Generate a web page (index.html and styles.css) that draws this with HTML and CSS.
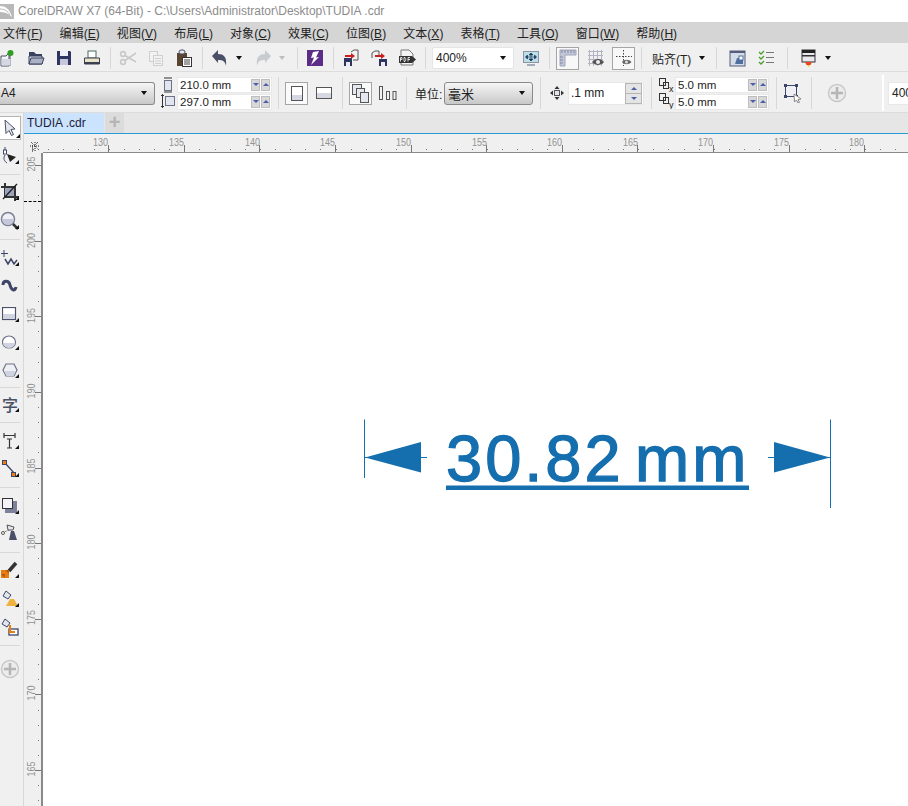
FILE: index.html
```html
<!DOCTYPE html>
<html lang="zh">
<head>
<meta charset="utf-8">
<title>CorelDRAW X7</title>
<link rel="stylesheet" href="styles.css">
</head>
<body>
<div class="app">
  <header class="title">
    <svg class="logo" width="15" height="15" viewBox="0 0 15 15"><rect width="15" height="15" fill="#b9b9b9"/><path d="M1 2c5 0 10 3 12 11C9 9 5 8 1 8z" fill="#fff"/><path d="M1 5c4 0 8 2 10 6" stroke="#b9b9b9" fill="none"/></svg>
    <span>CorelDRAW X7 (64-Bit) - C:\Users\Administrator\Desktop\TUDIA .cdr</span>
  </header>
  <nav class="menu">
    <span>文件(<u>F</u>)</span><span>编辑(<u>E</u>)</span><span>视图(<u>V</u>)</span><span>布局(<u>L</u>)</span><span>对象(<u>C</u>)</span><span>效果(<u>C</u>)</span><span>位图(<u>B</u>)</span><span>文本(<u>X</u>)</span><span>表格(<u>T</u>)</span><span>工具(<u>O</u>)</span><span>窗口(<u>W</u>)</span><span>帮助(<u>H</u>)</span>
  </nav>

  <div class="tb1">
    <div class="cell first"><svg width="18" height="18" viewBox="0 0 18 18"><path d="M2 7h5l3-3v13H2z M8 5h3v12" fill="#f4f4f4" stroke="#4a5068"/><rect x="2.500" y="10" width="9" height="6.500" fill="#d5d7e2"/><circle cx="11.500" cy="4" r="3" fill="#2f9e1f"/></svg></div>
    <div class="cell"><svg width="18" height="18" viewBox="0 0 18 18"><path d="M2 3h5l2 2h6v3H2z" fill="#39415f"/><path d="M2 15V7h13v8z" fill="#d6d9e4" stroke="#39415f"/><path d="M2 15l2-6h13l-2 6z" fill="#aab0c6" stroke="#39415f"/></svg></div>
    <div class="cell"><svg width="18" height="18" viewBox="0 0 18 18"><path d="M2 2h13l1 1v13H2z" fill="#2e3560"/><rect x="5" y="2" width="8" height="5" fill="#eef0f6"/><rect x="5" y="10" width="8" height="6" fill="#c4c8da"/></svg></div>
    <div class="cell"><svg width="18" height="18" viewBox="0 0 18 18"><rect x="5" y="2" width="8" height="7" fill="#fff" stroke="#4a6a5f"/><path d="M1.500 9h15v6h-15z" fill="#e9e3c8" stroke="#3b3f52"/><rect x="2" y="13" width="14" height="2" fill="#3b3f52"/></svg></div>
    <i class="sep"></i>
    <div class="cell"><svg width="18" height="18" viewBox="0 0 18 18"><g fill="none" stroke="#c9c9c9" stroke-width="1.600"><circle cx="4" cy="5" r="2.400"/><circle cx="4" cy="13" r="2.400"/><path d="M6 6.500L17 13M6 11.500L17 4"/></g></svg></div>
    <div class="cell"><svg width="18" height="18" viewBox="0 0 18 18"><g fill="#f2f2f2" stroke="#cfcfcf"><rect x="2.500" y="2.500" width="8" height="10"/><rect x="6.500" y="6.500" width="9" height="10"/></g><path d="M8 9.500h6M8 12h6M8 14.500h6" stroke="#cfcfcf"/></svg></div>
    <div class="cell"><svg width="18" height="18" viewBox="0 0 18 18"><rect x="2" y="4" width="10" height="13" fill="#5a4630"/><rect x="4" y="1" width="6" height="4" rx="2" fill="#e7e7e7" stroke="#4a5068"/><rect x="7.500" y="8.500" width="9" height="9" fill="#fff" stroke="#333"/><path d="M9 11h6M9 13h6M9 15h6" stroke="#444"/></svg></div>
    <i class="sep"></i>
    <div class="cell"><svg width="18" height="18" viewBox="0 0 18 18"><path d="M1 7l6-6v4c6 0 9 3 8 12-1-5-3-6-8-6v3z" fill="#4a5068"/></svg></div>
    <div class="cell narrow"><i class="caret"></i></div>
    <div class="cell ml5"><svg width="18" height="18" viewBox="0 0 18 18"><path d="M17 7l-6-6v4C5 5 2 8 3 17c1-5 3-6 8-6v3z" fill="#c8ccd0"/></svg></div>
    <div class="cell narrow"><i class="caret faded"></i></div>
    <i class="sep ml6"></i>
    <div class="cell"><svg width="18" height="18" viewBox="0 0 18 18"><rect x="1" y="1" width="16" height="16" fill="#5b2d88"/><path d="M13 2L7 3 5 9l3-.5-3 7.500 8-8-3 .5z" fill="#fff"/></svg></div>
    <i class="sep"></i>
    <div class="cell"><svg width="18" height="18" viewBox="0 0 18 18"><path d="M9 3l3-2h4v10h-5" fill="#f2f2f2" stroke="#555"/><rect x="2" y="9" width="8" height="8" fill="#2e3560"/><rect x="4" y="13" width="4" height="4" fill="#eee"/><path d="M3 6h6V4l4 3-4 3V8H3z" fill="#c81e1e"/></svg></div>
    <div class="cell"><svg width="18" height="18" viewBox="0 0 18 18"><path d="M2 9V4l3-2h4v6" fill="#f2f2f2" stroke="#555"/><rect x="9" y="10" width="8" height="7" fill="#2e3560"/><rect x="11" y="13" width="4" height="4" fill="#eee"/><path d="M5 6h6V4l4 3-4 3V8H5z" fill="#c81e1e"/></svg></div>
    <div class="cell"><svg width="18" height="18" viewBox="0 0 18 18"><path d="M3 1h8l4 4v11H3z" fill="#f4f4f4" stroke="#777"/><rect x="1" y="7" width="13" height="7" fill="#333"/><path d="M14 7l4 3.500-4 3.500z" fill="#333"/><path d="M2.500 12.500v-4h1.500v2H2.500M6 8.500v4h1c1 0 1-4 0-4zM10 12.500v-4h2M10 10.500h2" stroke="#fff" stroke-width=".8" fill="none"/></svg></div>
    <i class="sep"></i>
    <div class="zoom ml3"><span>400%</span><i class="caret"></i></div>
    <div class="cell ml3"><svg width="18" height="18" viewBox="0 0 18 18"><rect x="1.500" y="2.500" width="15" height="11" fill="#bcdfe6" stroke="#8a94a8"/><path d="M9 4v8M4 8h10M9 4l-2 2h4zM9 12l-2-2h4zM3.500 8l2-2v4zM14.500 8l-2-2v4z" stroke="#1e3a5f" stroke-width=".7" fill="#1e3a5f"/><path d="M5 16h8" stroke="#8a94a8" stroke-width="1.500"/></svg></div>
    <i class="sep"></i>
    <div class="boxed ml3"><svg width="18" height="18" viewBox="0 0 18 18"><path d="M1 1h16v5H6v11H1z" fill="#c2c8da" stroke="#a0a6b8"/><path d="M3 1v3M6 1v3M9 1v3M12 1v3M15 1v3M1 8h3M1 11h3M1 14h3" stroke="#858ba0"/></svg></div>
    <div class="cell ml3"><svg width="18" height="18" viewBox="0 0 18 18"><path d="M1 2.500h15M1 6.500h15M1 10.500h15M1 14.500h15M2.500 1v16M6.500 1v16M10.500 1v16M14.500 1v16" stroke="#b2b4c4" fill="none"/><path d="M5 13c3-4 9-4 12 0-3 4-9 4-12 0z" fill="#555"/><circle cx="11" cy="13" r="2" fill="#eee"/></svg></div>
    <div class="boxed ml2"><svg width="18" height="18" viewBox="0 0 18 18"><path d="M8.500 1v16M1 7.500h16" stroke="#444" stroke-dasharray="1.500 1.500"/><path d="M7 13c2-3 7-3 9.500 0-2.500 3-7.500 3-9.500 0z" fill="#666"/><circle cx="11.500" cy="13" r="1.500" fill="#ddd"/></svg></div>
    <i class="sep ml2"></i>
    <div class="snap ml7">贴齐(T)</div>
    <div class="cell narrow ml6"><i class="caret"></i></div>
    <i class="sep ml5"></i>
    <div class="cell ml3"><svg width="18" height="18" viewBox="0 0 18 18"><rect x="2" y="2" width="15" height="15" fill="#d4dcea" stroke="#555d7a"/><rect x="2" y="2" width="15" height="2" fill="#555d7a"/><path d="M7 15l2-6h6v6z" fill="#4f6fa0"/><rect x="11" y="7" width="4" height="4" fill="#fff" stroke="#4f6fa0"/></svg></div>
    <div class="cell ml1"><svg width="18" height="18" viewBox="0 0 18 18"><g fill="none" stroke="#4aa02c" stroke-width="1.300"><path d="M2 3l2 2 3-3M2 8l2 2 3-3M2 13l2 2 3-3"/></g><path d="M9 3.500h8M9 8.500h8M9 13.500h8" stroke="#777" stroke-width="1.200"/></svg></div>
    <i class="sep ml3"></i>
    <div class="cell ml3"><svg width="18" height="18" viewBox="0 0 18 18"><rect x="3" y="1" width="13" height="12" fill="#e8e8ee" stroke="#333"/><rect x="3" y="1" width="13" height="3" fill="#222"/><rect x="3" y="6" width="13" height="1.500" fill="#333"/><path d="M6 13h7l-1.500 3h-4z" fill="#e8461e"/><path d="M8 16h3l-1.500 2z" fill="#f3c318"/></svg></div>
    <div class="cell narrow ml1"><i class="caret"></i></div>
  </div>

  <div class="tb2">
    <div class="combo first-combo"><span>A4</span><i class="caret"></i></div>
    <div class="stack ml6">
      <svg width="14" height="16" viewBox="0 0 14 16"><path d="M3 1h8M3 15h8" stroke="#333"/><rect x="3.500" y="3.500" width="7" height="10" fill="#e2e4ee" stroke="#6c7288"/></svg>
      <svg width="14" height="16" viewBox="0 0 14 16"><path d="M1.500 1v14M0 2.500h3M0 13.500h3" stroke="#333"/><rect x="4.500" y="3.500" width="9" height="9" fill="#e2e4ee" stroke="#6c7288"/></svg>
    </div>
    <div class="pair ml2">
      <div class="field"><span>210.0 mm</span><b class="spin down"></b><b class="spin up"></b></div>
      <div class="field"><span>297.0 mm</span><b class="spin down"></b><b class="spin up"></b></div>
    </div>
    <i class="bar ml6"></i>
    <div class="boxed2 ml6"><svg width="12" height="15" viewBox="0 0 12 15"><rect x=".5" y=".5" width="11" height="14" fill="#fff" stroke="#555"/><rect x="1" y="9" width="10" height="5" fill="#d5d7e2"/></svg></div>
    <div class="cell2"><svg width="16" height="12" viewBox="0 0 16 12"><rect x=".5" y=".5" width="15" height="11" fill="#fff" stroke="#555"/><rect x="1" y="6" width="14" height="5" fill="#d5d7e2"/></svg></div>
    <i class="bar ml2"></i>
    <div class="boxed2 ml6"><svg width="17" height="19" viewBox="0 0 17 19"><rect x=".5" y=".5" width="9" height="10" fill="#e6e8f0" stroke="#555"/><rect x="4.500" y="4.500" width="8" height="9" fill="#e6e8f0" stroke="#555"/><rect x="8.500" y="8.500" width="8" height="10" fill="#e6e8f0" stroke="#555"/></svg></div>
    <div class="cell2"><svg width="18" height="14" viewBox="0 0 18 14"><g fill="#f2f2f6" stroke="#555"><rect x=".5" y=".5" width="3" height="13"/><rect x="7.500" y="5.500" width="3" height="8"/><rect x="14" y="5.500" width="3" height="8"/></g></svg></div>
    <i class="bar ml2"></i>
    <span class="label ml8">单位:</span>
    <div class="combo unit ml2"><span>毫米</span><i class="caret"></i></div>
    <i class="bar ml7"></i>
    <div class="cell3 ml8"><svg width="14" height="14" viewBox="0 0 14 14"><path d="M7 0l2.500 3h-5zM7 14l2.500-3h-5zM0 7l3-2.500v5zM14 7l-3-2.500v5z" fill="#333"/><rect x="4.500" y="4.500" width="5" height="5" fill="#e2e4ee" stroke="#555"/></svg></div>
    <div class="nudge ml3"><span>.1 mm</span><div class="vspin"><b class="up"></b><b class="down"></b></div></div>
    <i class="bar ml7"></i>
    <div class="stack dup ml7">
      <svg width="15" height="16" viewBox="0 0 15 16"><g fill="none" stroke="#333"><rect x=".5" y="1.500" width="6" height="7"/><rect x="4.500" y="5.500" width="5" height="6"/></g><text x="10" y="15" class="xy">x</text></svg>
      <svg width="15" height="16" viewBox="0 0 15 16"><g fill="none" stroke="#333"><rect x=".5" y=".5" width="6" height="7"/><rect x="4.500" y="4.500" width="5" height="6"/></g><text x="10" y="15" class="xy">y</text></svg>
    </div>
    <div class="pair dupf">
      <div class="field"><span>5.0 mm</span><b class="spin down"></b><b class="spin up"></b></div>
      <div class="field"><span>5.0 mm</span><b class="spin down"></b><b class="spin up"></b></div>
    </div>
    <i class="bar ml7"></i>
    <div class="cell4 ml6"><svg width="20" height="20" viewBox="0 0 20 20"><rect x="2.500" y="2.500" width="11" height="11" fill="#eef0f6" stroke="#3d4668"/><path d="M1 1h3v3H1zM12 1h3v3h-3zM1 12h3v3H1zM12 12h3v3h-3z" fill="#3d4668"/><path d="M11 11l7 5-3 .5 1.500 3-1.500.5-1.500-3-2 2z" fill="#fff" stroke="#888"/></svg></div>
    <i class="bar ml8"></i>
    <div class="cell4 ml15"><svg width="20" height="20" viewBox="0 0 20 20"><circle cx="10" cy="10" r="8.500" fill="#ececec" stroke="#c8c8c8" stroke-width="1.500"/><path d="M10 4v12M4 10h12" stroke="#b5b5b5" stroke-width="2.500"/></svg></div>
    <i class="strip"></i>
    <div class="last"><span>400</span></div>
  </div>

  <div class="main">
    <aside class="tools">
      <div class="tool pick"><svg width="16" height="18" viewBox="0 0 16 18"><path d="M3 1l10 9-4 .5 2.500 5-2 1-2.500-5-3 3z" fill="#e4e6ee" stroke="#4a5068"/></svg><i class="tri"></i></div>
      <div class="tool"><svg width="18" height="20" viewBox="0 0 18 20"><path d="M4 1v4M4 9c-2 3-1 6 2 8" fill="none" stroke="#3d4668"/><rect x="2.500" y="4" width="3" height="4" fill="#fff" stroke="#3d4668"/><path d="M6 8l9 3-6 5z" fill="#222"/></svg><i class="tri"></i></div>
      <i class="hr"></i>
      <div class="tool"><svg width="18" height="18" viewBox="0 0 18 18"><path d="M4 0v14h14M0 4h14v14" fill="none" stroke="#333" stroke-width="2"/><rect x="4" y="5" width="9" height="8" fill="#9da3bd"/><path d="M16 1L2 16" stroke="#222" stroke-width="1.300"/></svg><i class="tri"></i></div>
      <div class="tool mt1"><svg width="20" height="20" viewBox="0 0 20 20"><circle cx="8" cy="8" r="6.500" fill="#eef0f6" stroke="#7a7f95" stroke-width="1.500"/><path d="M2 8a6 6 0 0 0 12 0z" fill="#c4c8da"/><path d="M13 13l5 5" stroke="#333" stroke-width="2.500"/></svg><i class="tri"></i></div>
      <i class="hr"></i>
      <div class="tool mt1"><svg width="20" height="18" viewBox="0 0 20 18"><path d="M4 1v7M1 4.500h7" stroke="#3d4668"/><path d="M5 10l3 5 3-5 3 5 3-4" fill="none" stroke="#3d4668" stroke-width="1.500"/></svg><i class="tri"></i></div>
      <div class="tool"><svg width="18" height="14" viewBox="0 0 18 14"><path d="M2 6c0-5 6-5 7 0s5 7 6 2" fill="none" stroke="#3d4668" stroke-width="3"/></svg></div>
      <div class="tool"><svg width="16" height="14" viewBox="0 0 16 14"><rect x=".5" y=".5" width="13" height="12" fill="#fff" stroke="#4a5068" stroke-width="1.200"/><rect x="1" y="7" width="12" height="5" fill="#d0d3e0"/></svg><i class="tri"></i></div>
      <div class="tool"><svg width="16" height="14" viewBox="0 0 16 14"><ellipse cx="7" cy="7" rx="6.500" ry="6" fill="#fff" stroke="#6c7288" stroke-width="1.200"/><path d="M1 8h12a6 5 0 0 1-12 0z" fill="#d0d3e0"/></svg><i class="tri"></i></div>
      <div class="tool"><svg width="16" height="14" viewBox="0 0 16 14"><path d="M1 7l3-6h8l3 6-3 6H4z" fill="#eef0f6" stroke="#6c7288" stroke-width="1.200"/><path d="M2 8h12l-2.500 5h-7z" fill="#d0d3e0"/></svg><i class="tri"></i></div>
      <i class="hr s7"></i>
      <div class="tool glyph">字<i class="tri"></i></div>
      <i class="hr tight"></i>
      <div class="tool"><svg width="18" height="18" viewBox="0 0 18 18"><path d="M3 1v5M14 1v5M3 3.500h11M6 7h5M6 16h5M8.500 7v9" stroke="#333" stroke-width="1.200"/></svg><i class="tri"></i></div>
      <div class="tool"><svg width="16" height="18" viewBox="0 0 16 18"><path d="M3 3l10 11" stroke="#3d4668" stroke-width="1.300"/><rect x=".5" y=".5" width="4" height="4" fill="#ef7f12" stroke="#3d4668"/><rect x="9.500" y="12.500" width="4" height="4" fill="#ef7f12" stroke="#3d4668"/></svg><i class="tri"></i></div>
      <i class="hr"></i>
      <div class="tool mt1"><svg width="16" height="16" viewBox="0 0 16 16"><rect x="3" y="3" width="12" height="12" fill="#7c809a"/><rect x=".5" y=".5" width="10" height="10" fill="#f4f4f8" stroke="#333"/></svg><i class="tri"></i></div>
      <div class="tool"><svg width="18" height="20" viewBox="0 0 18 20"><path d="M1 9l7-3" stroke="#777" stroke-dasharray="2 1"/><circle cx="2" cy="9" r="1.500" fill="#fff" stroke="#555"/><path d="M6 1l7 2-1 3H7z" fill="#e2e4ee" stroke="#555"/><path d="M10 7h3l3 9H8z" fill="#4a5068"/></svg></div>
      <i class="hr"></i>
      <div class="tool"><svg width="18" height="18" viewBox="0 0 18 18"><path d="M8 10L15 2" stroke="#333" stroke-width="3.500"/><rect x="0" y="9" width="8" height="8" fill="#e87c10"/><path d="M0 13h4v4M4 9h4v4" fill="#b85a08"/></svg><i class="tri"></i></div>
      <div class="tool mt1"><svg width="18" height="18" viewBox="0 0 18 18"><path d="M5 1l5 4-3 4-5-3z" fill="#e2e4ee" stroke="#3d4668"/><path d="M9 9h4l4 7H5z" fill="#eeb23e"/></svg><i class="tri"></i></div>
      <div class="tool"><svg width="18" height="18" viewBox="0 0 18 18"><path d="M4 1l5 4-3 4-5-3z" fill="#e2e4ee" stroke="#3d4668"/><rect x="8" y="11" width="9" height="6" fill="#fff" stroke="#3d4668" stroke-width="1.300"/><path d="M9 7v7h5" fill="none" stroke="#e87c10" stroke-width="2"/></svg></div>
      <i class="hr"></i>
      <div class="tool plus"><svg width="20" height="20" viewBox="0 0 20 20"><circle cx="10" cy="10" r="8.500" fill="#ececec" stroke="#c8c8c8" stroke-width="1.500"/><path d="M10 4v12M4 10h12" stroke="#b5b5b5" stroke-width="2.500"/></svg></div>
    </aside>
    <section class="work">
      <div class="tabs"><div class="tab">TUDIA .cdr</div><div class="add">+</div></div>
      <div class="hruler-row">
        <svg class="hruler" width="884" height="19" viewBox="24 134 884 19">
          <path d="M30 141h10M35 146v-10M31 137l8 8M38 137l-3 3" transform="translate(0 5)" stroke="#222" stroke-dasharray="1 1"/>
          <g class="rtext">
            <text x="108" y="146" textLength="15" lengthAdjust="spacingAndGlyphs">130</text><text x="184" y="146" textLength="15" lengthAdjust="spacingAndGlyphs">135</text><text x="260" y="146" textLength="15" lengthAdjust="spacingAndGlyphs">140</text><text x="335" y="146" textLength="15" lengthAdjust="spacingAndGlyphs">145</text><text x="411" y="146" textLength="15" lengthAdjust="spacingAndGlyphs">150</text><text x="487" y="146" textLength="15" lengthAdjust="spacingAndGlyphs">155</text><text x="562" y="146" textLength="15" lengthAdjust="spacingAndGlyphs">160</text><text x="638" y="146" textLength="15" lengthAdjust="spacingAndGlyphs">165</text><text x="713" y="146" textLength="15" lengthAdjust="spacingAndGlyphs">170</text><text x="789" y="146" textLength="15" lengthAdjust="spacingAndGlyphs">175</text><text x="864" y="146" textLength="15" lengthAdjust="spacingAndGlyphs">180</text>
          </g>
        </svg>
      </div>
      <div class="below">
        <div class="vruler">
          <i class="cursor"></i>
          <svg width="18" height="653" viewBox="24 153 18 653">
            <g class="rtext mid">
              <text transform="translate(35 164) rotate(-90)" textLength="15" lengthAdjust="spacingAndGlyphs">205</text><text transform="translate(35 240.500) rotate(-90)" textLength="15" lengthAdjust="spacingAndGlyphs">200</text><text transform="translate(35 315.500) rotate(-90)" textLength="15" lengthAdjust="spacingAndGlyphs">195</text><text transform="translate(35 391) rotate(-90)" textLength="15" lengthAdjust="spacingAndGlyphs">190</text><text transform="translate(35 466) rotate(-90)" textLength="15" lengthAdjust="spacingAndGlyphs">185</text><text transform="translate(35 542) rotate(-90)" textLength="15" lengthAdjust="spacingAndGlyphs">180</text><text transform="translate(35 617.500) rotate(-90)" textLength="15" lengthAdjust="spacingAndGlyphs">175</text><text transform="translate(35 693) rotate(-90)" textLength="15" lengthAdjust="spacingAndGlyphs">170</text><text transform="translate(35 769) rotate(-90)" textLength="15" lengthAdjust="spacingAndGlyphs">165</text>
            </g>
          </svg>
        </div>
        <div class="canvas">
          <svg class="drawing" width="865" height="653" viewBox="43 153 865 653">
            <g class="dim">
              <path d="M364.500 419.500V478M830.500 419.500V508M364.500 457.500H427M768 457.500H830.500"/>
              <polygon points="365,457.500 421,442 421,472.500"/>
              <polygon points="830,457.500 774,442 774,472.500"/>
              <text x="446" y="481">30.82 mm</text>
              <rect x="446" y="485.500" width="303" height="4.500"/>
            </g>
          </svg>
        </div>
      </div>
    </section>
  </div>
</div>
</body>
</html>
```
FILE: styles.css
```css
* { box-sizing: border-box; }
html, body { margin: 0; height: 100%; overflow: hidden; background: #fff; }
body { font: 12px "Liberation Sans", "Noto Sans CJK SC", sans-serif; color: #222; }
svg { display: block; flex: none; }
.app { width: 908px; height: 806px; display: flex; flex-direction: column; overflow: hidden; }

.title { height: 22px; flex: none; display: flex; align-items: center; gap: 4px; color: #8c8c8c; font-size: 12px; white-space: nowrap; }
.logo { margin-top: 1px; margin-left: -1px; }

.menu { height: 21px; flex: none; background: #d5d5d5; display: flex; align-items: center; gap: 17px; padding-left: 3px; font-size: 12px; color: #222; white-space: nowrap; }
.menu span { letter-spacing: .05px; }

.tb1 { height: 29px; flex: none; background: #f0f0f0; border-bottom: 1px solid #dcdcdc; display: flex; align-items: center; padding-top: 2px; }
.cell { width: 28px; height: 24px; display: flex; align-items: center; justify-content: center; flex: none; }
.cell.first { margin-left: -6px; }
.cell.narrow { width: 10px; }
.sep { width: 8px; height: 22px; flex: none; background: linear-gradient(#d8d8d8, #d8d8d8) center / 1px 100% no-repeat; }
.caret { display: block; flex: none; width: 0; height: 0; border: 3.500px solid transparent; border-top: 4px solid #111; border-bottom: 0; }
.caret.faded { border-top-color: #bdbdbd; }
.zoom { width: 82px; height: 22px; background: #fff; border: 1px solid #e4e4e4; border-radius: 2px; display: flex; align-items: center; justify-content: space-between; padding: 0 7px 0 3px; flex: none; }
.boxed { width: 23px; height: 23px; background: #f8f8f8; border: 1px solid #a5a5a5; display: flex; align-items: center; justify-content: center; flex: none; }
.snap { width: 39px; flex: none; white-space: nowrap; font-size: 12px; color: #222; }

.tb2 { height: 41px; flex: none; background: #f0f0f0; border-bottom: 1px solid #dcdcdc; display: flex; align-items: center; overflow: hidden; padding-top: 2px; }
.combo { height: 23px; border: 1px solid #8a8a8a; border-radius: 3px; background: linear-gradient(#f6f6f6, #c8c8c8); display: flex; align-items: center; justify-content: space-between; padding: 0 7px 0 3px; flex: none; }
.first-combo { width: 155px; padding-left: 1px; border-left: 0; border-radius: 0 3px 3px 0; }
.unit { width: 89px; font-size: 13px; }
.stack { width: 14px; display: flex; flex-direction: column; gap: 0; flex: none; }
.pair { width: 95px; display: flex; flex-direction: column; gap: 1px; flex: none; }
.field { height: 16px; background: #fff; border: 1px solid #e8e8e8; display: flex; align-items: center; padding-left: 2px; gap: 1px; font-size: 11.500px; color: #222; }
.field span { flex: 1; }
.spin { width: 9px; height: 12px; background: #d8d8d8; border: 1px solid #bdbdbd; display: flex; align-items: center; justify-content: center; flex: none; }
.field .spin:last-child { margin-right: 1px; }
.spin::after, .vspin b::after { content: ""; width: 0; height: 0; border: 3px solid transparent; }
.spin.down::after, .vspin .down::after { border-top: 3px solid #4a5fa8; border-bottom: 0; }
.spin.up::after, .vspin .up::after { border-bottom: 3px solid #4a5fa8; border-top: 0; }
.bar { width: 1px; height: 32px; background: #d8d8d8; flex: none; }
.boxed2 { width: 23px; height: 23px; background: #fafafa; border: 1px solid #a5a5a5; display: flex; align-items: center; justify-content: center; flex: none; }
.cell2 { width: 32px; display: flex; align-items: center; justify-content: center; flex: none; }
.cell3 { width: 16px; display: flex; justify-content: center; flex: none; }
.cell4 { width: 20px; flex: none; }
.label { width: 27px; flex: none; white-space: nowrap; color: #222; }
.nudge { width: 76px; height: 23px; background: #fff; border: 1px solid #e8e8e8; display: flex; align-items: center; justify-content: space-between; padding-left: 2px; font-size: 12px; flex: none; }
.vspin { width: 17px; height: 21px; margin-right: 1px; border: 1px solid #b5b5b5; background: #e4e4e4; display: flex; flex-direction: column; }
.vspin b { flex: 1; display: flex; align-items: center; justify-content: center; }
.vspin b + b { border-top: 1px solid #b5b5b5; }
.dup { width: 16px; }
.dupf { width: 94px; }
.xy { font-size: 9px; fill: #222; }
.strip { width: 2px; height: 36px; background: #fff; margin-left: 35px; flex: none; }
.last { width: 60px; height: 23px; margin-left: 4px; background: #fff; border: 1px solid #e8e8e8; padding: 3px 0 0 3px; flex: none; }

.main { flex: 1; display: flex; min-height: 0; }
.tools { width: 24px; flex: none; background: #f0f0f0; border-right: 1px solid #d8d8d8; display: flex; flex-direction: column; padding-top: 3px; }
.tool { position: relative; width: 20px; height: 28px; display: flex; align-items: center; justify-content: center; flex: none; }
.tool.pick { width: 21px; height: 24px; background: #fff; border: 1px solid #b5b5b5; border-left: 0; margin-bottom: 2px; }
.tool.mt1 { margin-top: 1px; }
.tool.plus { margin-top: 6px; }
.tool.glyph { font: 500 16px "Noto Sans CJK SC", sans-serif; color: #4a5068; }
.tri { position: absolute; right: 1px; bottom: 6px; width: 0; height: 0; border-style: solid; border-width: 0 0 4px 4px; border-color: transparent transparent #111 transparent; }
.pick .tri { right: 0; bottom: 1px; }
.hr { display: block; flex: none; height: 8px; width: 20px; background: linear-gradient(#d8d8d8, #d8d8d8) center / 100% 1px no-repeat; }
.hr.s7 { height: 6px; }
.hr.tight { height: 9px; }

.work { flex: 1; min-width: 0; display: flex; flex-direction: column; }
.tabs { height: 21px; flex: none; background: #e6e6e6; border-bottom: 1px solid #2b9bd8; display: flex; }
.tab { width: 80px; background: #cbe3fd; padding: 3px 0 0 3px; color: #1b1b3d; }
.add { width: 19px; margin-left: 1px; background: #dcdcdc; color: #b5b5b5; font: 700 20px/19px "Liberation Sans", sans-serif; text-align: center; }

.hruler-row { height: 19px; flex: none; background: #f0f0f0; }
.hruler {
  background:
    linear-gradient(#8a8a8a, #8a8a8a) 19px 100% / 100% 1px no-repeat,
    repeating-linear-gradient(90deg, #777 84px 85px, transparent 85px 159.640px) 0 calc(100% - 1px) / 100% 7px no-repeat,
    repeating-linear-gradient(90deg, #777 9px 10px, transparent 10px 24.128px) 0 calc(100% - 3px) / 100% 1px no-repeat;
}
.rtext text { font: 11px "Liberation Sans", sans-serif; fill: #929292; text-anchor: end; }
.rtext.mid text { text-anchor: middle; }

.below { flex: 1; display: flex; min-height: 0; }
.vruler { position: relative; width: 19px; flex: none; border-right: 2px solid #8a8a8a;
  background:
    repeating-linear-gradient(180deg, #777 12px 13px, transparent 13px 87.640px) 100% 0 / 6px 100% no-repeat,
    repeating-linear-gradient(180deg, #777 12px 13px, transparent 13px 27.128px) calc(100% - 2px) 0 / 1px 100% no-repeat,
    #f0f0f0;
}
.cursor { position: absolute; left: 0; right: 0; top: 48px; border-top: 1px dashed #000; }
.canvas { position: relative; flex: 1; background: #fff; min-width: 0; }
.drawing { position: absolute; left: 0; top: 0; }
.dim path { stroke: #156eae; stroke-width: 1; fill: none; }
.dim polygon, .dim rect { fill: #156eae; }
.dim text { font: 65px "Liberation Sans", sans-serif; letter-spacing: 3px; word-spacing: -9.600px; fill: #156eae; stroke: #156eae; stroke-width: 1.300px; }

.ml1 { margin-left: 1px; } .ml2 { margin-left: 2px; } .ml3 { margin-left: 3px; } .ml5 { margin-left: 5px; }
.ml6 { margin-left: 6px; } .ml7 { margin-left: 7px; } .ml8 { margin-left: 8px; } .ml15 { margin-left: 15px; }
```
